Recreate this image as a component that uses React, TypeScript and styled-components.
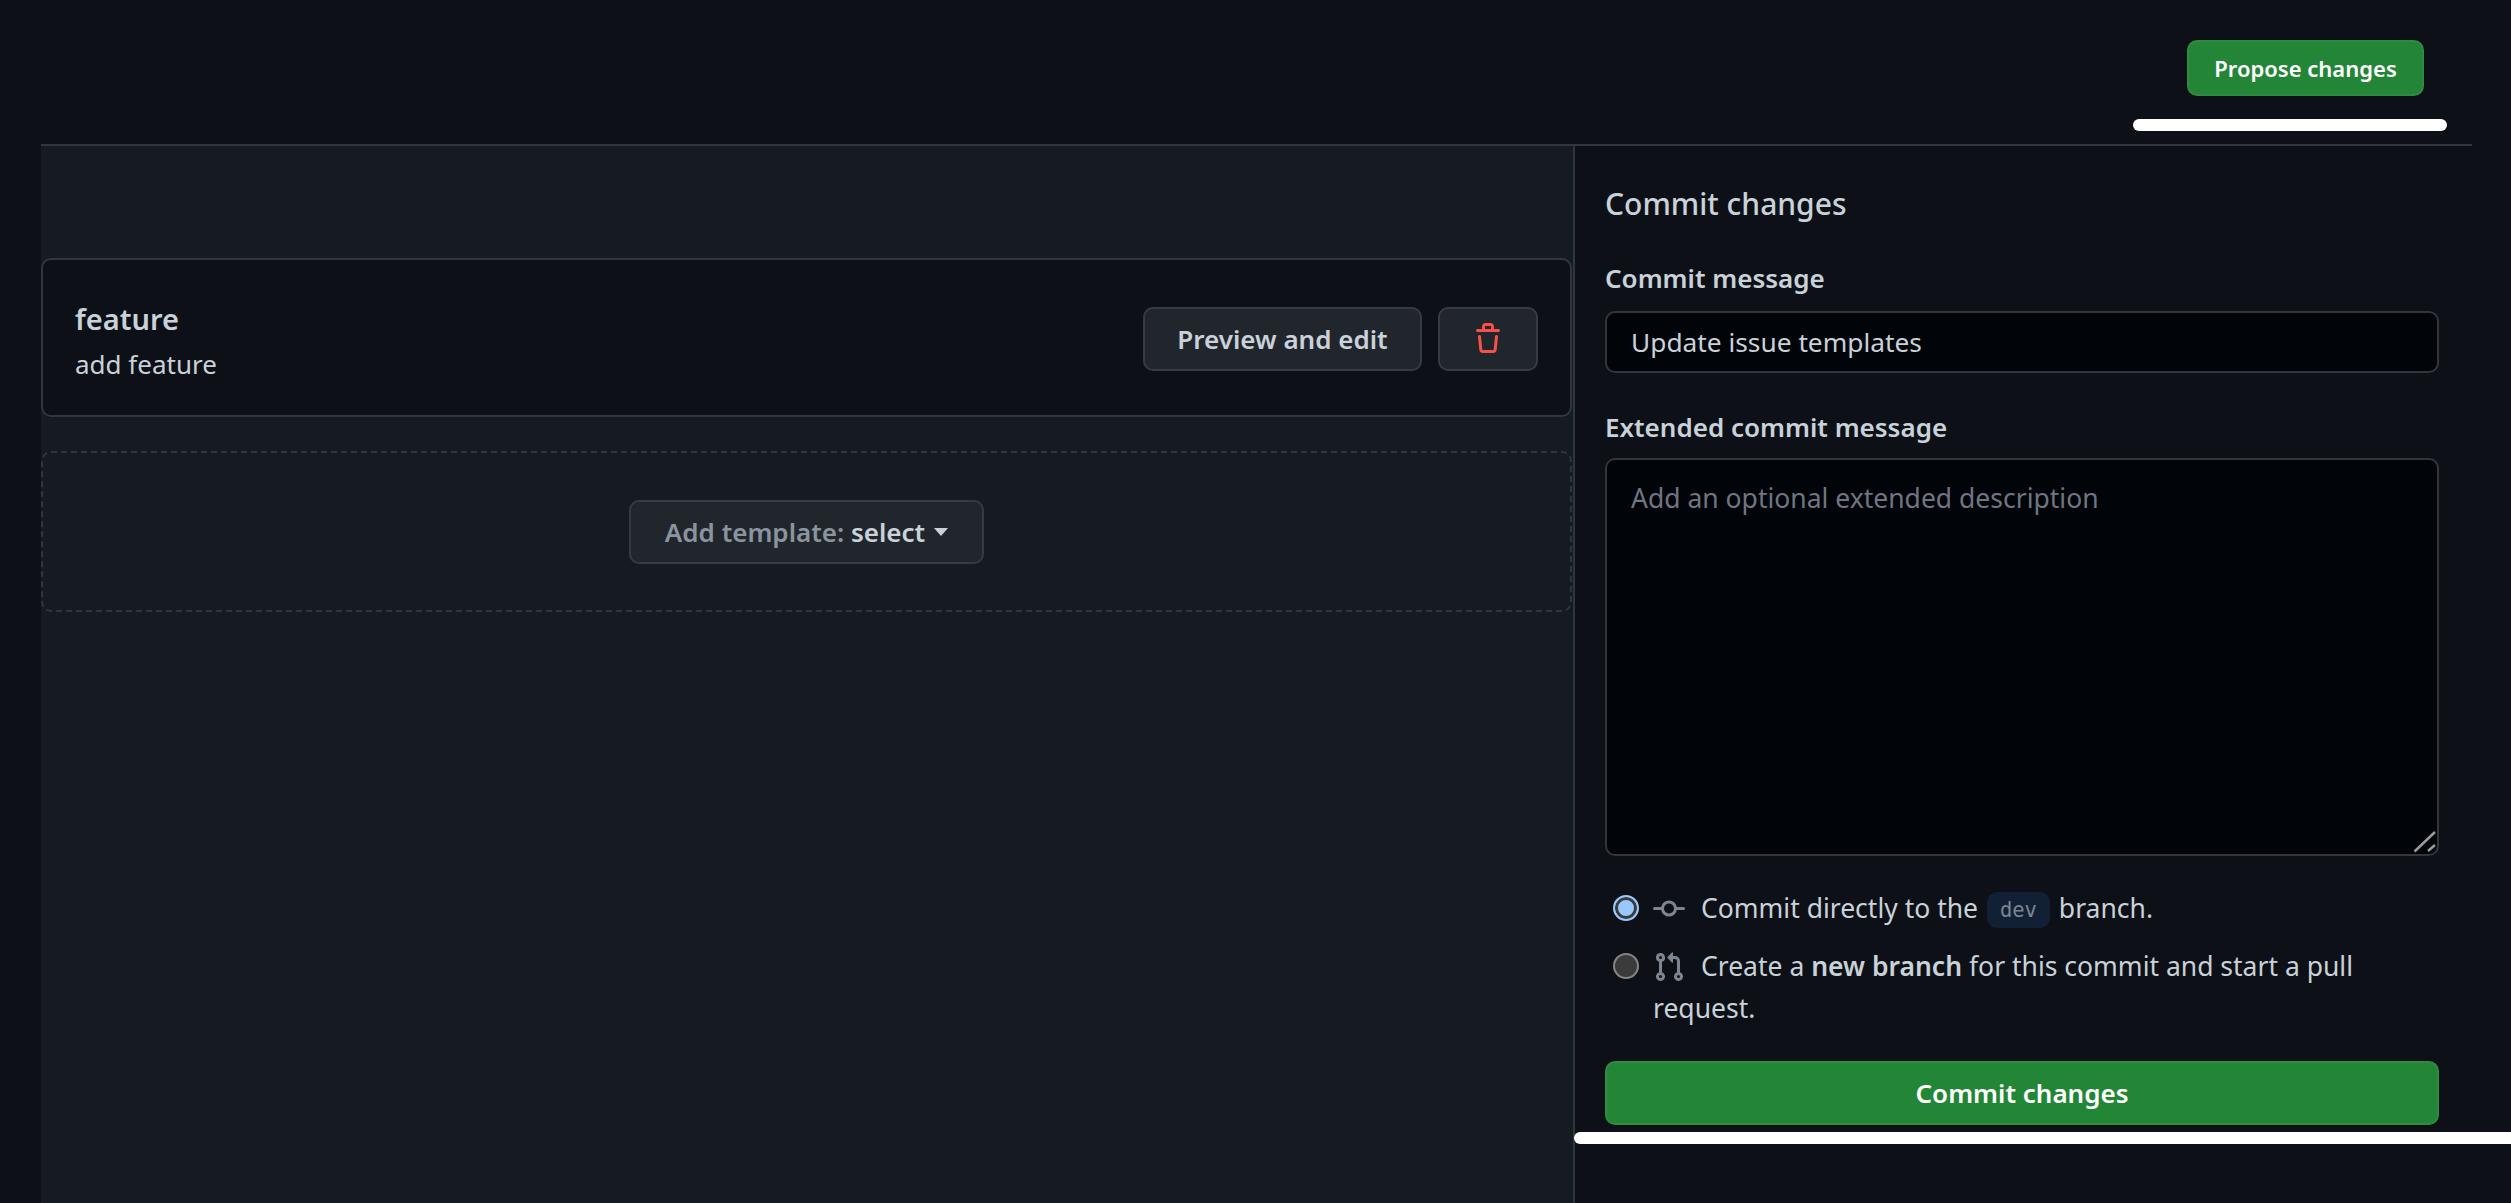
import React from "react";
import styled, { createGlobalStyle } from "styled-components";

const GlobalStyle = createGlobalStyle`
  * {
    box-sizing: border-box;
  }
  html,
  body {
    margin: 0;
    height: 100%;
    overflow: hidden;
    background: #0d1117;
    color: #c9d1d9;
    font-family: "Noto Sans", "Open Sans", "Liberation Sans", sans-serif;
    font-size: 26px;
  }
`;

const Page = styled.div`
  position: relative;
  width: 2511px;
  height: 1203px;
  padding-left: 41px;
  background: #0d1117;
`;

const Shell = styled.div`
  width: 2431px;
  height: 100%;
  display: flex;
  flex-direction: column;
`;

const Header = styled.header`
  height: 146px;
  flex: none;
  display: flex;
  justify-content: flex-end;
  align-items: flex-start;
  padding: 40px 48px 0 0;
  border-bottom: 2px solid #30363d;
`;

const Main = styled.main`
  flex: 1;
  display: flex;
  min-height: 0;
`;

const Templates = styled.section`
  width: 1532px;
  flex: none;
  padding-top: 112px;
  padding-right: 1px;
  background: #161b22;
`;

const Card = styled.div`
  height: 159px;
  display: flex;
  align-items: center;
  justify-content: space-between;
  padding: 0 32px 0 32px;
  background: #0d1117;
  border: 2px solid #30363d;
  border-radius: 10px;
`;

const CardBody = styled.div`
  margin-top: 9px;
`;

const CardTitle = styled.div`
  font-size: 29px;
  font-weight: 600;
  line-height: 44px;
`;

const CardText = styled.div`
  font-size: 26px;
  line-height: 46px;
`;

const CardActions = styled.div`
  display: flex;
  gap: 16px;
  margin-top: 3px;
`;

const Button = styled.button<{ $wide?: boolean }>`
  height: 64px;
  width: ${({ $wide }) => ($wide ? "279px" : "100px")};
  display: flex;
  align-items: center;
  justify-content: center;
  padding: 0;
  font-family: inherit;
  font-size: 26px;
  font-weight: 600;
  color: #c9d1d9;
  background: #21262d;
  border: 2px solid #363b42;
  border-radius: 10px;
`;

const TrashIcon = () => (
  <svg viewBox="0 0 16 16" width="32" height="32" fill="#f85149">
    <path d="M11 1.75V3h2.25a.75.75 0 0 1 0 1.5H2.75a.75.75 0 0 1 0-1.5H5V1.75C5 .784 5.784 0 6.75 0h2.5C10.216 0 11 .784 11 1.75ZM4.496 6.675l.66 6.6a.25.25 0 0 0 .249.225h5.19a.25.25 0 0 0 .249-.225l.66-6.6a.75.75 0 0 1 1.492.149l-.66 6.6A1.748 1.748 0 0 1 10.595 15h-5.19a1.75 1.75 0 0 1-1.741-1.575l-.66-6.6a.75.75 0 1 1 1.492-.15ZM6.5 1.75V3h3V1.75a.25.25 0 0 0-.25-.25h-2.5a.25.25 0 0 0-.25.25Z" />
  </svg>
);

const CommitIcon = () => (
  <svg viewBox="0 0 16 16" fill="currentColor">
    <path d="M11.93 8.5a4.002 4.002 0 0 1-7.86 0H.75a.75.75 0 0 1 0-1.5h3.32a4.002 4.002 0 0 1 7.86 0h3.32a.75.75 0 0 1 0 1.5Zm-1.43-.75a2.5 2.5 0 1 0-5 0 2.5 2.5 0 0 0 5 0Z" />
  </svg>
);

const PullRequestIcon = () => (
  <svg viewBox="0 0 16 16" fill="currentColor">
    <path d="M1.5 3.25a2.25 2.25 0 1 1 3 2.122v5.256a2.251 2.251 0 1 1-1.5 0V5.372A2.25 2.25 0 0 1 1.5 3.25Zm5.677-.177L9.573.677A.25.25 0 0 1 10 .854V2.5h1A2.5 2.5 0 0 1 13.5 5v5.628a2.251 2.251 0 1 1-1.5 0V5a1 1 0 0 0-1-1h-1v1.646a.25.25 0 0 1-.427.177L7.177 3.427a.25.25 0 0 1 0-.354ZM3.75 2.5a.75.75 0 1 0 0 1.5.75.75 0 0 0 0-1.5Zm0 9.5a.75.75 0 1 0 0 1.5.75.75 0 0 0 0-1.5Zm8.25.75a.75.75 0 1 0 1.5 0 .75.75 0 0 0-1.5 0Z" />
  </svg>
);

const Dropzone = styled.div`
  height: 161px;
  margin-top: 34px;
  display: flex;
  align-items: center;
  justify-content: center;
  border: 2px dashed #30363d;
  border-radius: 10px;
`;

const AddButton = styled(Button)`
  width: 355px;
  gap: 9px;
  color: #8b949e;
  b {
    color: #c9d1d9;
    font-weight: 600;
  }
`;

const Caret = styled.span`
  width: 0;
  height: 0;
  border-style: solid;
  border-width: 8px 7px 0;
  border-color: #c9d1d9 transparent transparent;
`;

const Sidebar = styled.aside`
  flex: 1;
  padding: 39px 33px 0 30px;
  border-left: 2px solid #30363d;
  display: flex;
  flex-direction: column;
`;

const SidebarTitle = styled.h3`
  margin: 0;
  font-size: 30px;
  font-weight: 500;
  line-height: 38px;
`;

const Label = styled.label<{ $top: number }>`
  display: block;
  margin-top: ${({ $top }) => $top}px;
  font-size: 26px;
  font-weight: 600;
  line-height: 36px;
`;

const MessageInput = styled.input`
  display: block;
  width: 100%;
  height: 62px;
  margin-top: 15px;
  padding: 0 24px;
  font-family: inherit;
  font-size: 26.3px;
  color: #c9d1d9;
  background: #010409;
  border: 2px solid #30363d;
  border-radius: 10px;
  outline: none;
`;

const DescriptionWrap = styled.div`
  position: relative;
  margin-top: 13px;
`;

const DescriptionInput = styled.textarea`
  display: block;
  width: 100%;
  height: 398px;
  padding: 22px 24px;
  font-family: inherit;
  font-size: 26.5px;
  line-height: 32px;
  color: #c9d1d9;
  background: #010409;
  border: 2px solid #30363d;
  border-radius: 10px;
  outline: none;
  resize: none;
  &::placeholder {
    color: #6e7681;
    opacity: 1;
  }
`;

const ResizeGrip = styled.svg`
  position: absolute;
  right: 3px;
  bottom: 3px;
  width: 24px;
  height: 24px;
  stroke: #9a9a9a;
  stroke-width: 2.5;
`;

const Options = styled.div`
  margin-top: 31px;
  display: flex;
  flex-direction: column;
  gap: 16px;
`;

const Option = styled.label`
  display: block;
  padding-left: 48px;
  position: relative;
  font-size: 26.5px;
  line-height: 42px;
  b {
    font-weight: 600;
  }
`;

const Radio = styled.input`
  appearance: none;
  position: absolute;
  left: 8px;
  top: 8px;
  width: 26px;
  height: 26px;
  margin: 0;
  border-radius: 50%;
  border: 2px solid #858585;
  background: #3b3b3b;
  &:checked {
    border: 2px solid #99c8ff;
    background: #99c8ff;
    box-shadow: inset 0 0 0 3px #3b3b3b;
  }
`;

const OptionIcon = styled.span`
  display: inline-flex;
  vertical-align: -7px;
  margin-right: 16px;
  color: #7d8590;
  svg {
    width: 32px;
    height: 32px;
  }
`;

const Code = styled.code`
  display: inline-block;
  padding: 0 13px;
  margin: 0 2px;
  font-family: "DejaVu Sans Mono", monospace;
  font-size: 20.5px;
  line-height: 36px;
  color: #7d8590;
  background: #122036;
  border-radius: 10px;
  vertical-align: 1px;
`;

const Submit = styled.button<{ $small?: boolean }>`
  height: ${({ $small }) => ($small ? "56px" : "64px")};
  width: ${({ $small }) => ($small ? "237px" : "100%")};
  padding: 0;
  font-family: inherit;
  font-size: ${({ $small }) => ($small ? "22px" : "26px")};
  font-weight: 600;
  color: #fff;
  background: #238636;
  border: 2px solid #2f8b42;
  border-radius: 10px;
`;

const CommitRow = styled.div`
  margin-top: 32px;
`;

const Redaction = styled.div<{ $left: number; $top: number; $width: number; $round?: boolean }>`
  position: absolute;
  left: ${({ $left }) => $left}px;
  top: ${({ $top }) => $top}px;
  width: ${({ $width }) => $width}px;
  height: 12px;
  background: #fff;
  border-radius: ${({ $round }) => ($round ? "6px" : "6px 0 0 6px")};
`;

const App = () => {
  return (
    <Page>
      <GlobalStyle />
      <Shell>
        <Header>
          <Submit $small>Propose changes</Submit>
        </Header>
        <Main>
          <Templates>
            <Card>
              <CardBody>
                <CardTitle>feature</CardTitle>
                <CardText>add feature</CardText>
              </CardBody>
              <CardActions>
                <Button $wide>Preview and edit</Button>
                <Button aria-label="Delete">
                  <TrashIcon />
                </Button>
              </CardActions>
            </Card>
            <Dropzone>
              <AddButton>
                <span>
                  Add template: <b>select</b>
                </span>
                <Caret />
              </AddButton>
            </Dropzone>
          </Templates>
          <Sidebar>
            <SidebarTitle>Commit changes</SidebarTitle>
            <Label $top={37}>Commit message</Label>
            <MessageInput defaultValue="Update issue templates" />
            <Label $top={36}>Extended commit message</Label>
            <DescriptionWrap>
              <DescriptionInput placeholder="Add an optional extended description" />
              <ResizeGrip viewBox="0 0 24 24">
                <path d="M2.5 22.5L23 3M16 22L23 16" />
              </ResizeGrip>
            </DescriptionWrap>
            <Options>
              <Option>
                <Radio type="radio" name="target" defaultChecked />
                <OptionIcon>
                  <CommitIcon />
                </OptionIcon>
                Commit directly to the <Code>dev</Code> branch.
              </Option>
              <Option>
                <Radio type="radio" name="target" />
                <OptionIcon>
                  <PullRequestIcon />
                </OptionIcon>
                Create a <b>new branch</b> for this commit and start a pull request.
              </Option>
            </Options>
            <CommitRow>
              <Submit>Commit changes</Submit>
            </CommitRow>
          </Sidebar>
        </Main>
      </Shell>
      <Redaction $left={2133} $top={119} $width={314} $round />
      <Redaction $left={1574} $top={1132} $width={937} />
    </Page>
  );
};

export default App;
